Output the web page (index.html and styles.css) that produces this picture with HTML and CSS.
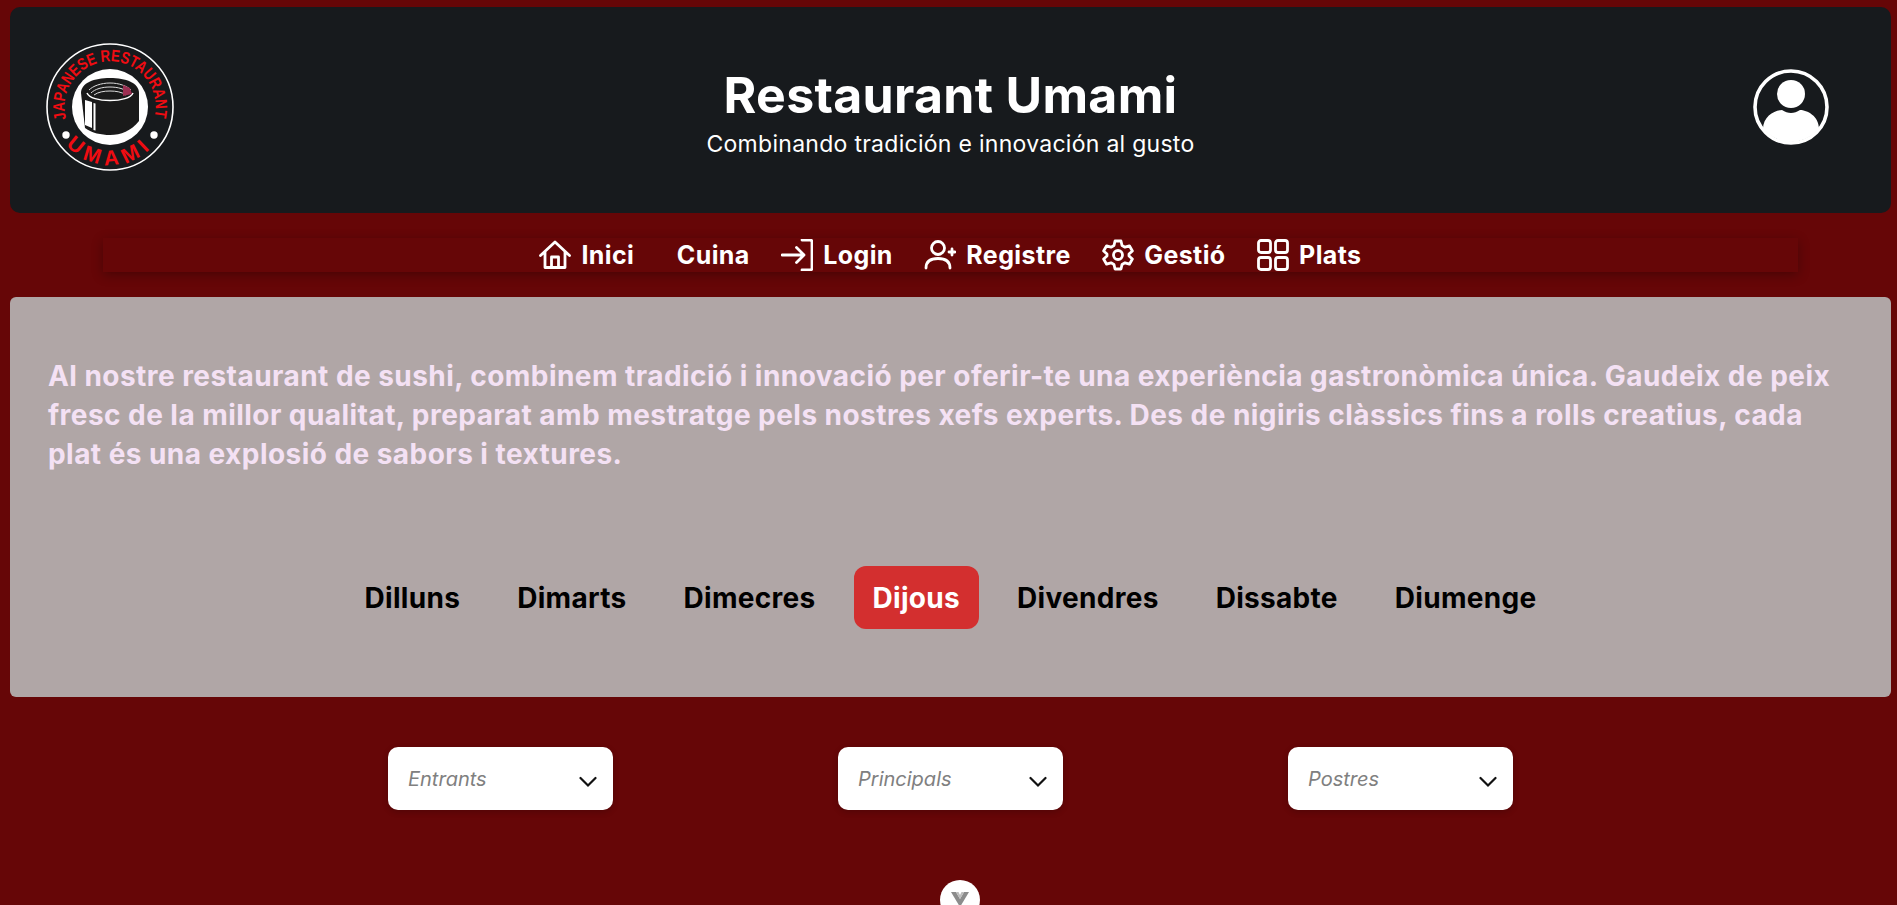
FILE: index.html
```html
<!DOCTYPE html>
<html lang="ca">
<head>
<meta charset="utf-8">
<title>Restaurant Umami</title>
<link rel="stylesheet" href="styles.css">
</head>
<body>
<header class="header">
  <svg class="logo" viewBox="0 0 128 128" width="128" height="128">
    <circle cx="64" cy="64" r="63" fill="#171a1d" stroke="#fff" stroke-width="1.600"/>
    <defs>
      <path id="arcTop" d="M 20.100 75.800 A 45.500 45.500 0 1 1 107.900 75.800"/>
      <path id="arcBottom" d="M 13.800 93 A 58 58 0 0 0 114.200 93"/>
    </defs>
    <text class="logo-top"><textPath href="#arcTop" textLength="165" lengthAdjust="spacingAndGlyphs">JAPANESE RESTAURANT</textPath></text>
    <text class="logo-bottom"><textPath href="#arcBottom" startOffset="50%" text-anchor="middle">UMAMI</textPath></text>
    <circle cx="20" cy="92" r="3.700" fill="#fff"/>
    <circle cx="108" cy="92" r="3.700" fill="#fff"/>
    <circle cx="64" cy="64" r="38" fill="#fff"/>
    <path d="M35 50C35 40 48 35 64 35S93 40 93 50L93 78C85 88 75 92 64 92C55 92 46 90 39 85Z" fill="#1a1a1a"/>
    <path d="M43 47c4-4 12-7 21-7s17 3 21 7M45 50c4-4 11-6 19-6s15 2 19 6M48 52c4-3 10-4 16-4s12 1 16 4" fill="none" stroke="#dcdcdc" stroke-width="1"/>
    <path d="M41 50C43 55 53 57.500 64 57.500S85 55 87 50" fill="none" stroke="#fff" stroke-width="1.500"/>
    <path d="M77 42l7 3 2 6-9 2z" fill="#9c2f52"/>
    <path d="M39 57l7 2v26l-7-3z" fill="#fff"/>
    <path d="M47.500 60l2 .5v27l-2-.5z" fill="#fff"/>
  </svg>
  <div class="brand">
    <h1 class="brand-title">Restaurant Umami</h1>
    <p class="brand-sub">Combinando tradición e innovación al gusto</p>
  </div>
  <svg class="avatar" viewBox="0 0 76 76" width="76" height="76">
    <defs><clipPath id="avClip"><circle cx="38" cy="38" r="35"/></clipPath></defs>
    <circle cx="38" cy="38" r="36" fill="none" stroke="#fff" stroke-width="3.600"/>
    <circle cx="38" cy="25" r="14" fill="#fff"/>
    <path d="M10 76V60c0-13 12-19 19-19 3 2 6 3 9 3s6-1 9-3c7 0 19 6 19 19v16z" fill="#fff" clip-path="url(#avClip)"/>
  </svg>
</header>

<nav class="nav">
  <a class="nav-link">
    <svg class="nav-icon" viewBox="0 0 32 32"><path d="M1.500 16.500 16 3l14.500 13.500M6 13v15.500h20V13M12.500 28.500V18h7v10.500"/></svg>
    Inici
  </a>
  <a class="nav-link nav-link-plain">Cuina</a>
  <a class="nav-link">
    <svg class="nav-icon" viewBox="0 0 32 32"><path d="M1 16h22M15.500 8.500 23 16l-7.500 7.500M21 1h8a2 2 0 0 1 2 2v26a2 2 0 0 1-2 2h-8"/></svg>
    Login
  </a>
  <a class="nav-link">
    <svg class="nav-icon" viewBox="0 0 32 32"><circle cx="14" cy="9" r="6.500"/><path d="M2 29c0-7 5-9.500 12-9.500S26 22 26 29M25 13h6M28 10v6"/></svg>
    Registre
  </a>
  <a class="nav-link">
    <svg class="nav-icon" viewBox="0 0 32 32"><circle cx="16" cy="16" r="4.500"/><path d="M13 2h6l1 4.500 3 1.700 4.400-1.400 3 5.200L27 15v2l3.400 3-3 5.200-4.400-1.400-3 1.700L19 30h-6l-1-4.500-3-1.700-4.400 1.400-3-5.200L5 17v-2l-3.400-3 3-5.200L9 8.200l3-1.700z"/></svg>
    Gestió
  </a>
  <a class="nav-link">
    <svg class="nav-icon" viewBox="0 0 32 32"><rect x="1.500" y="1.500" width="12" height="12" rx="2.500"/><rect x="18.500" y="1.500" width="12" height="12" rx="2.500"/><rect x="1.500" y="18.500" width="12" height="12" rx="2.500"/><rect x="18.500" y="18.500" width="12" height="12" rx="2.500"/></svg>
    Plats
  </a>
</nav>

<main class="panel">
  <p class="intro">Al nostre restaurant de sushi, combinem tradició i innovació per oferir-te una experiència gastronòmica única. Gaudeix de peix fresc de la millor qualitat, preparat amb mestratge pels nostres xefs experts. Des de nigiris clàssics fins a rolls creatius, cada plat és una explosió de sabors i textures.</p>
  <div class="days">
    <a class="day">Dilluns</a>
    <a class="day">Dimarts</a>
    <a class="day">Dimecres</a>
    <a class="day day-active">Dijous</a>
    <a class="day">Divendres</a>
    <a class="day">Dissabte</a>
    <a class="day">Diumenge</a>
  </div>
</main>

<section class="selects">
  <div class="select"><span>Entrants</span><svg class="chev" viewBox="0 0 18 12"><path d="M1.500 2 9 9.500 16.500 2"/></svg></div>
  <div class="select"><span>Principals</span><svg class="chev" viewBox="0 0 18 12"><path d="M1.500 2 9 9.500 16.500 2"/></svg></div>
  <div class="select"><span>Postres</span><svg class="chev" viewBox="0 0 18 12"><path d="M1.500 2 9 9.500 16.500 2"/></svg></div>
</section>

<div class="scroll">
  <svg class="scroll-icon" viewBox="0 0 20 16" width="20" height="16"><path d="M1 1h18L10 16z" fill="#8c8c8c"/><path d="M6 1h8l-4 7z" fill="#fff"/><path d="M6 1h2.500L10 4l1.500-3H14l-4 7z" fill="#bdbdbd"/></svg>
</div>
</body>
</html>
```
FILE: styles.css
```css
* { box-sizing: border-box; }
html, body { margin: 0; height: 905px; overflow: hidden; }
body {
  background: #660607;
  font-family: "Inter", "Liberation Sans", sans-serif;
  color: #fff;
  padding: 7px 6px 0 10px;
}
.header {
  height: 206px;
  background: #171a1d;
  border-radius: 10px;
  display: grid;
  grid-template-columns: 1fr auto 1fr;
  align-items: center;
  padding: 0 36px 6px;
}
.logo { display: block; }
.logo-top { font: 700 16.500px "Liberation Sans", sans-serif; fill: #f00c12; }
.logo-bottom { font: 700 21px "Liberation Sans", sans-serif; fill: #f00c12; letter-spacing: 5.500px; }
.brand { text-align: center; padding-top: 10px; }
.brand-title { margin: 0; font-size: 50px; font-weight: 700; line-height: 58px; letter-spacing: .3px; }
.brand-sub { margin: 6px 0 0; font-size: 23px; font-weight: 400; line-height: 28px; letter-spacing: .28px; }
.avatar { justify-self: end; margin-right: 26px; }
.nav {
  height: 34px;
  margin: 25px 93px 0;
  display: flex;
  justify-content: center;
  align-items: center;
  gap: 31.500px;
  box-shadow: 0 3px 12px rgba(0, 0, 0, .3);
}
.nav-link {
  display: flex;
  align-items: center;
  gap: 10px;
  font-size: 25px;
  font-weight: 700;
  color: #fff;
  letter-spacing: .4px;
}
.nav-link-plain { margin-left: 11px; }
.nav-icon {
  width: 32px;
  height: 32px;
  fill: none;
  stroke: #fff;
  stroke-width: 2.800;
  stroke-linecap: round;
  stroke-linejoin: round;
}
.panel {
  margin-top: 25px;
  height: 400px;
  background: #b0a6a6;
  border-radius: 6px;
  padding: 60px 38px 0;
}
.intro {
  margin: 0;
  font-size: 28px;
  font-weight: 700;
  line-height: 39px;
  color: #f4e1f4;
  letter-spacing: .45px;
}
.days {
  margin-top: 92px;
  display: flex;
  justify-content: center;
  gap: 19px;
}
.day {
  height: 63px;
  padding: 0 19px;
  display: flex;
  align-items: center;
  border-radius: 12px;
  font-size: 28px;
  font-weight: 700;
  color: #000;
  letter-spacing: .3px;
}
.day-active { background: #d32f2f; color: #fff; }
.selects {
  margin-top: 50px;
  display: flex;
  justify-content: center;
  gap: 225px;
}
.select {
  width: 225px;
  height: 63px;
  background: #fff;
  border-radius: 10px;
  display: flex;
  align-items: center;
  justify-content: space-between;
  padding: 0 16px 0 20px;
  font-size: 20px;
  font-style: italic;
  color: #808080;
  box-shadow: 0 2px 6px rgba(0, 0, 0, .2);
}
.chev { width: 18px; height: 12px; fill: none; stroke: #111; stroke-width: 2.200; stroke-linecap: round; margin-top: 6px; }
.scroll {
  position: absolute;
  left: 940px;
  top: 880px;
  width: 40px;
  height: 40px;
  border-radius: 50%;
  background: #fff;
  display: flex;
  justify-content: center;
  padding-top: 11px;
}
.scroll-icon { display: block; }
```
